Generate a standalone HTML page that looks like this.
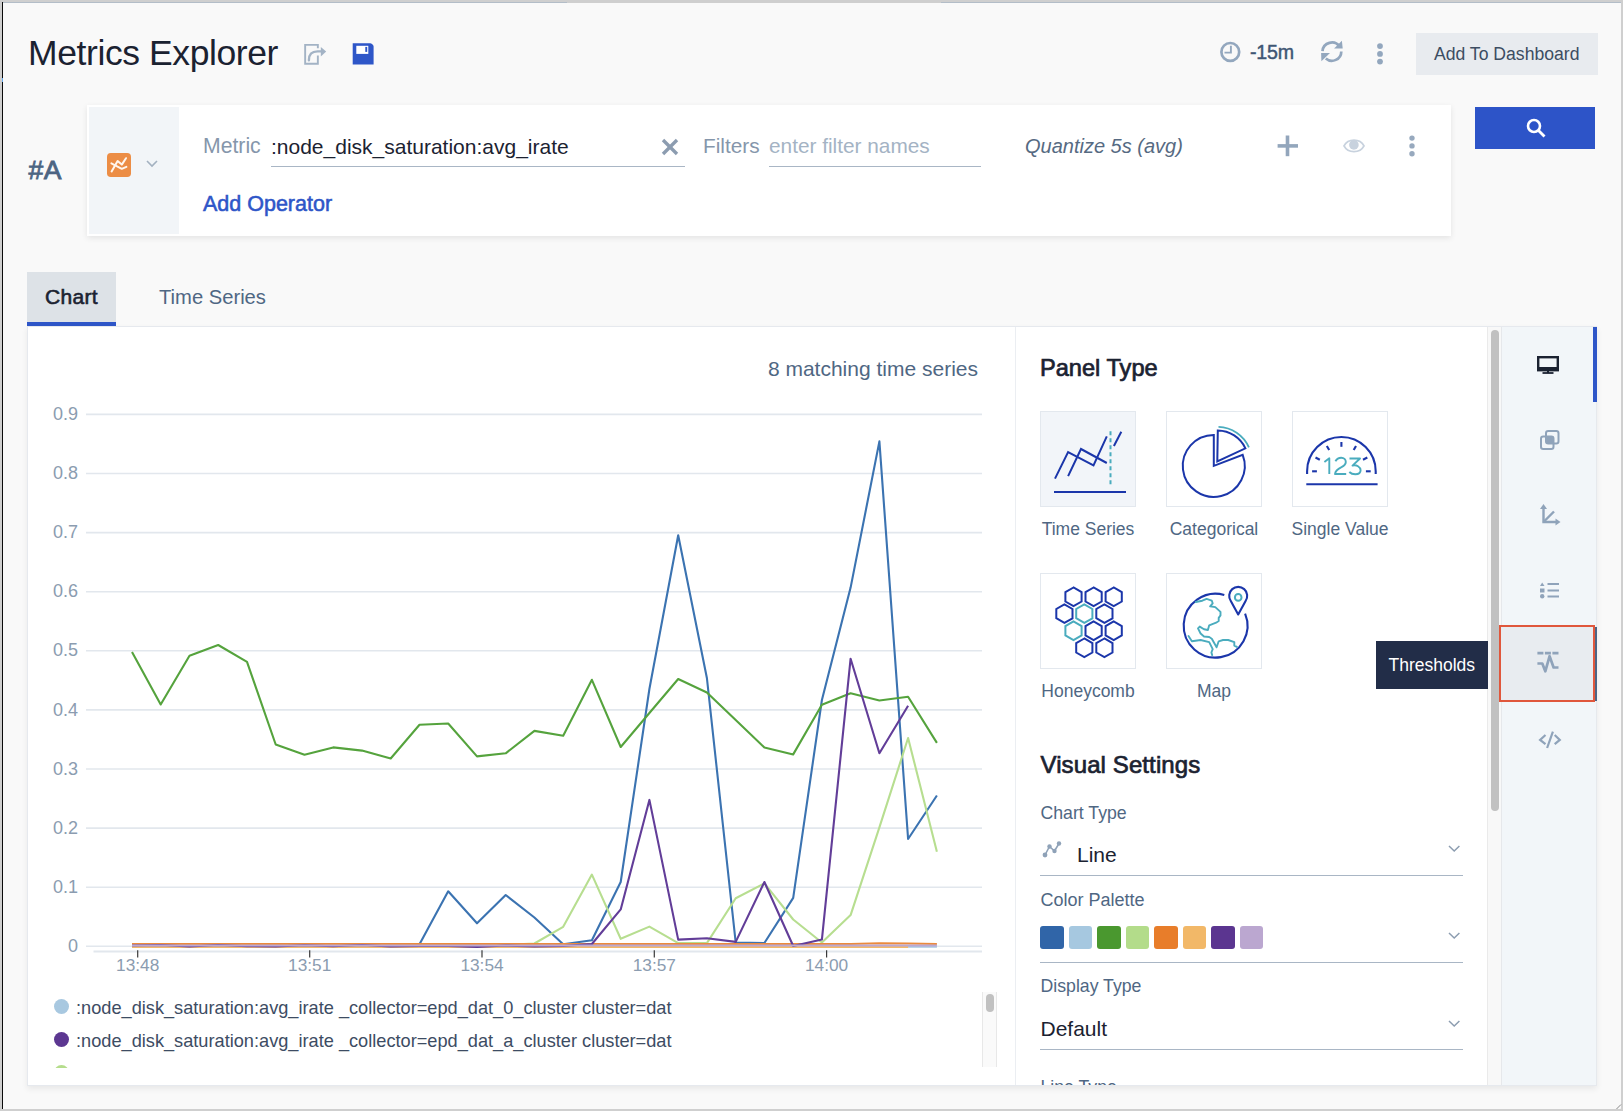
<!DOCTYPE html>
<html><head><meta charset="utf-8"><style>
html,body{margin:0;padding:0;}
body{width:1623px;height:1111px;position:relative;overflow:hidden;background:#f9f9f9;font-family:"Liberation Sans", sans-serif;}
.t{position:absolute;white-space:nowrap;line-height:1;font-family:"Liberation Sans", sans-serif;}
svg{overflow:visible}
</style></head><body>
<div style="position:absolute;left:0px;top:0px;width:1623px;height:3px;background:#cfcfcf"></div>
<div style="position:absolute;left:3px;top:2px;width:564px;height:1px;background:#b3bdc8"></div>
<div style="position:absolute;left:941px;top:2px;width:680px;height:1px;background:#b3bdc8"></div>
<div style="position:absolute;left:0px;top:0px;width:2px;height:1111px;background:#cfcfcf"></div>
<div style="position:absolute;left:2px;top:2px;width:1px;height:1109px;background:#0a0a0a"></div>
<div style="position:absolute;left:2px;top:78px;width:1px;height:4px;background:#6aaef0"></div>
<div style="position:absolute;left:1621px;top:0px;width:2px;height:1111px;background:#cfcfcf"></div>
<div style="position:absolute;left:0px;top:1109px;width:1623px;height:2px;background:#cfcfcf"></div>
<svg style="position:absolute;left:1608px;top:1096px" width="15" height="15" viewBox="0 0 15 15"><path d="M15 7 V15 H7 A8 8 0 0 0 15 7 Z" fill="#cfcfcf"/><path d="M13 8.5 L8.5 13" stroke="#8a8a8a" stroke-width="1"/></svg>
<div class="t" style="left:28px;top:36.2px;font-size:35.5px;color:#1b2231;font-weight:400;font-style:normal;letter-spacing:-0.4px;">Metrics Explorer</div>
<svg style="position:absolute;left:302px;top:43px" width="26" height="23" viewBox="0 0 26 23"><path d="M15.85 5.3 V1.85 H3.15 V20.75 H15.85 V12.5" fill="none" stroke="#a3b3c5" stroke-width="1.9"/><path d="M6.9 17.2 C6.9 11 10 8.4 15.5 8.4 H19.5" fill="none" stroke="#a3b3c5" stroke-width="2.4" stroke-linecap="round"/><path d="M18.8 3.9 L24.2 8.4 L18.8 13.6 Z" fill="#a3b3c5"/></svg>
<svg style="position:absolute;left:352px;top:43px" width="23" height="23" viewBox="0 0 23 23"><path d="M0.7 0.3 H18.2 Q19.2 0.3 20 1.1 L21 2.1 Q21.6 2.8 21.6 3.6 V21.4 H0.7 Z" fill="#2e56c8"/><rect x="4.3" y="2.8" width="12" height="8.1" fill="#ffffff"/><rect x="13.3" y="3.9" width="1.9" height="5" fill="#2e56c8"/></svg>
<svg style="position:absolute;left:1219px;top:40px" width="23" height="23" viewBox="0 0 23 23"><circle cx="11.3" cy="11.9" r="8.9" fill="none" stroke="#93a7be" stroke-width="2.7"/><path d="M11.9 5.8 V12.6 H5.5" fill="none" stroke="#93a7be" stroke-width="1.9"/></svg>
<div class="t" style="left:1250px;top:42.6px;font-size:19.6px;color:#3f5674;font-weight:400;font-style:normal;letter-spacing:-0.2px;-webkit-text-stroke:0.45px #3f5674">-15m</div>
<svg style="position:absolute;left:1318px;top:38px" width="28" height="28" viewBox="0 0 28 28"><g fill="none" stroke="#93a7be" stroke-width="2.7"><path d="M4.5 13.1 A9.4 9.4 0 0 1 21.5 8.5"/><path d="M23.3 13.4 A9.4 9.4 0 0 1 7.8 20.5"/></g><path d="M23.9 2.8 L24.7 10.6 L16.1 10.6 Z" fill="#93a7be"/><path d="M3.1 15 L12 15 L3.4 23.3 Z" fill="#93a7be"/></svg>
<svg style="position:absolute;left:1376px;top:43px" width="8" height="22" viewBox="0 0 8 22"><g fill="#93a7be"><circle cx="4" cy="3.1" r="2.9"/><circle cx="4" cy="10.9" r="2.9"/><circle cx="4" cy="18.6" r="2.9"/></g></svg>
<div style="position:absolute;left:1416px;top:33px;width:182px;height:42px;background:#e8ebef"></div>
<div class="t" style="left:1434px;top:46.3px;font-size:17.6px;color:#3c4d62;font-weight:400;font-style:normal;letter-spacing:0px;">Add To Dashboard</div>
<div class="t" style="left:28.5px;top:156.9px;font-size:26.5px;color:#4c6482;font-weight:400;font-style:normal;letter-spacing:0.6px;-webkit-text-stroke:0.8px #4c6482">#A</div>
<div style="position:absolute;left:87px;top:105px;width:1364px;height:131px;background:#fff;box-shadow:0 2px 6px rgba(0,0,0,0.09)"></div>
<div style="position:absolute;left:89px;top:107px;width:90px;height:127px;background:#f2f5f8"></div>
<svg style="position:absolute;left:107px;top:153px" width="24" height="24" viewBox="0 0 24 24"><rect x="0" y="0" width="24" height="24" rx="3.8" fill="#ec8d45"/><g fill="none" stroke="#fff6ee" stroke-width="2" stroke-linecap="round" stroke-linejoin="round"><path d="M4.6 18.4 L10.6 8 L14.8 11.6 L19 5.2"/><path d="M4.4 10.4 L14.8 15.8 L19.4 13.8"/></g></svg>
<svg style="position:absolute;left:146px;top:160px" width="12" height="8" viewBox="0 0 12 8"><path d="M1 1 L6 6 L11 1" fill="none" stroke="#a3b1c0" stroke-width="1.6"/></svg>
<div class="t" style="left:203px;top:135.2px;font-size:21.2px;color:#8596ab;font-weight:400;font-style:normal;letter-spacing:0px;">Metric</div>
<div class="t" style="left:271px;top:135.7px;font-size:21px;color:#1b2231;font-weight:400;font-style:normal;letter-spacing:0px;">:node_disk_saturation:avg_irate</div>
<div style="position:absolute;left:271px;top:166px;width:414px;height:1.3px;background:#a9b6c5"></div>
<svg style="position:absolute;left:661px;top:138px" width="18" height="18" viewBox="0 0 18 18"><g stroke="#8c9cb0" stroke-width="3.4" stroke-linecap="butt"><path d="M2 2 L16 16"/><path d="M16 2 L2 16"/></g></svg>
<div class="t" style="left:703px;top:135.5px;font-size:20.8px;color:#8596ab;font-weight:400;font-style:normal;letter-spacing:0px;">Filters</div>
<div class="t" style="left:769px;top:135.5px;font-size:20.8px;color:#a4b3c4;font-weight:400;font-style:normal;letter-spacing:0px;">enter filter names</div>
<div style="position:absolute;left:769px;top:165.5px;width:212px;height:1.3px;background:#a9b6c5"></div>
<div class="t" style="left:1025px;top:135.7px;font-size:20px;color:#566a82;font-weight:400;font-style:italic;letter-spacing:0px;">Quantize 5s (avg)</div>
<svg style="position:absolute;left:1277px;top:135px" width="22" height="22" viewBox="0 0 22 22"><g stroke="#93a6bc" stroke-width="3.6"><path d="M10.5 0.5 V21.2"/><path d="M0.6 10.9 H21"/></g></svg>
<svg style="position:absolute;left:1343px;top:138px" width="22" height="16" viewBox="0 0 22 16"><defs><clipPath id="eyec"><path d="M1 7.9 C5 0.2 17 0.2 21 7.9 C17 15.6 5 15.6 1 7.9 Z"/></clipPath></defs><circle cx="10.9" cy="6.9" r="4.8" fill="#c8d2de" clip-path="url(#eyec)"/><path d="M1 7.9 C5 0.2 17 0.2 21 7.9 C17 15.6 5 15.6 1 7.9 Z" fill="none" stroke="#c8d2de" stroke-width="1.8"/></svg>
<svg style="position:absolute;left:1408px;top:135px" width="8" height="22" viewBox="0 0 8 22"><g fill="#97a9be"><circle cx="4" cy="3.1" r="2.7"/><circle cx="4" cy="10.9" r="2.7"/><circle cx="4" cy="18.8" r="2.7"/></g></svg>
<div class="t" style="left:203px;top:193.8px;font-size:21.5px;color:#2e56c8;font-weight:400;font-style:normal;letter-spacing:0px;-webkit-text-stroke:0.55px #2e56c8">Add Operator</div>
<div style="position:absolute;left:1475px;top:107px;width:120px;height:42px;background:#2d54c8"></div>
<svg style="position:absolute;left:1525.5px;top:117.5px" width="20" height="20" viewBox="0 0 20 20"><circle cx="8" cy="8" r="6" fill="none" stroke="#fff" stroke-width="2.6"/><path d="M12.5 12.5 L18.5 18.5" stroke="#fff" stroke-width="2.8"/></svg>
<div style="position:absolute;left:27px;top:272px;width:89px;height:50px;background:#dde2e7"></div>
<div style="position:absolute;left:27px;top:322px;width:89px;height:4px;background:#2e56c8"></div>
<div class="t" style="left:45px;top:285.9px;font-size:21px;color:#1b2231;font-weight:400;font-style:normal;letter-spacing:0.3px;-webkit-text-stroke:0.6px #1b2231">Chart</div>
<div class="t" style="left:159px;top:286.6px;font-size:20.2px;color:#4f6783;font-weight:400;font-style:normal;letter-spacing:0px;">Time Series</div>
<div style="position:absolute;left:27px;top:326px;width:1570px;height:760px;background:#fff;box-shadow:0 3px 6px rgba(0,0,0,0.07);border:1px solid #e6e9ee;box-sizing:border-box"></div>
<div style="position:absolute;left:1015px;top:327px;width:1px;height:758px;background:#ebeef2"></div>
<div class="t" style="right:645px;top:358.4px;font-size:21px;color:#4f6783;font-weight:400;font-style:normal;letter-spacing:0px;">8 matching time series</div>
<svg style="position:absolute;left:0px;top:0px" width="1623" height="1111" viewBox="0 0 1623 1111"><line x1="86" y1="946.3" x2="982" y2="946.3" stroke="#e2e7ed" stroke-width="1.6"/><line x1="86" y1="887.2" x2="982" y2="887.2" stroke="#e2e7ed" stroke-width="1.6"/><line x1="86" y1="828.1" x2="982" y2="828.1" stroke="#e2e7ed" stroke-width="1.6"/><line x1="86" y1="769.0" x2="982" y2="769.0" stroke="#e2e7ed" stroke-width="1.6"/><line x1="86" y1="709.9" x2="982" y2="709.9" stroke="#e2e7ed" stroke-width="1.6"/><line x1="86" y1="650.8" x2="982" y2="650.8" stroke="#e2e7ed" stroke-width="1.6"/><line x1="86" y1="591.7" x2="982" y2="591.7" stroke="#e2e7ed" stroke-width="1.6"/><line x1="86" y1="532.6" x2="982" y2="532.6" stroke="#e2e7ed" stroke-width="1.6"/><line x1="86" y1="473.5" x2="982" y2="473.5" stroke="#e2e7ed" stroke-width="1.6"/><line x1="86" y1="414.4" x2="982" y2="414.4" stroke="#e2e7ed" stroke-width="1.6"/><line x1="93.5" y1="951.5" x2="982" y2="951.5" stroke="#e2e7ed" stroke-width="1.8"/><line x1="137.7" y1="950.2" x2="137.7" y2="957.5" stroke="#3a3a3a" stroke-width="1.2"/><line x1="309.7" y1="950.2" x2="309.7" y2="957.5" stroke="#3a3a3a" stroke-width="1.2"/><line x1="482.0" y1="950.2" x2="482.0" y2="957.5" stroke="#3a3a3a" stroke-width="1.2"/><line x1="654.3" y1="950.2" x2="654.3" y2="957.5" stroke="#3a3a3a" stroke-width="1.2"/><line x1="826.6" y1="950.2" x2="826.6" y2="957.5" stroke="#3a3a3a" stroke-width="1.2"/><polyline points="132.0,945.0 160.7,945.0 189.5,945.0 218.2,945.0 247.0,945.0 275.7,945.0 304.5,945.0 333.2,945.0 362.0,945.0 390.7,945.0 419.5,944.3 448.2,891.3 477.0,923.3 505.7,895.0 534.4,917.5 563.2,944.3 591.9,940.2 620.7,882.0 649.4,689.0 678.2,535.2 706.9,678.0 735.7,942.5 764.4,943.0 793.2,897.9 821.9,700.0 850.6,587.6 879.4,441.4 908.1,839.0 936.9,795.5" fill="none" stroke="#3b73b1" stroke-width="2.1" stroke-linejoin="round" stroke-linecap="butt"/><polyline points="132.0,946.8 160.7,946.8 189.5,946.8 218.2,946.8 247.0,946.8 275.7,946.8 304.5,946.8 333.2,946.8 362.0,946.8 390.7,946.8 419.5,946.8 448.2,946.8 477.0,946.8 505.7,946.8 534.4,946.8 563.2,946.8 591.9,946.8 620.7,946.8 649.4,946.8 678.2,946.8 706.9,946.8 735.7,946.8 764.4,946.8 793.2,946.8 821.9,946.8 850.6,946.8 879.4,946.8 908.1,946.8 936.9,946.8" fill="none" stroke="#a8c8e0" stroke-width="2" stroke-linejoin="round" stroke-linecap="butt"/><polyline points="132.0,652.0 160.7,704.5 189.5,655.7 218.2,645.0 247.0,661.9 275.7,744.5 304.5,754.8 333.2,747.4 362.0,750.6 390.7,758.5 419.5,724.7 448.2,723.5 477.0,756.4 505.7,753.3 534.4,730.9 563.2,735.7 591.9,679.8 620.7,747.0 649.4,713.0 678.2,679.0 706.9,692.5 735.7,720.0 764.4,747.5 793.2,754.4 821.9,704.8 850.6,693.3 879.4,700.5 908.1,696.8 936.9,742.9" fill="none" stroke="#55a33d" stroke-width="2.1" stroke-linejoin="round" stroke-linecap="butt"/><polyline points="132.0,945.0 160.7,945.0 189.5,945.0 218.2,945.0 247.0,945.0 275.7,945.0 304.5,945.0 333.2,945.0 362.0,945.0 390.7,945.0 419.5,945.0 448.2,945.0 477.0,945.0 505.7,945.0 534.4,943.5 563.2,926.8 591.9,874.6 620.7,938.8 649.4,926.6 678.2,943.1 706.9,943.1 735.7,898.2 764.4,883.4 793.2,919.5 821.9,942.5 850.6,915.1 879.4,827.3 908.1,738.0 936.9,851.8" fill="none" stroke="#b7de90" stroke-width="2.1" stroke-linejoin="round" stroke-linecap="butt"/><polyline points="132.0,943.9 160.7,943.9 189.5,943.9 218.2,943.9 247.0,943.9 275.7,943.9 304.5,943.9 333.2,943.9 362.0,943.9 390.7,943.9 419.5,943.9 448.2,943.9 477.0,943.9 505.7,943.9 534.4,943.9 563.2,943.9 591.9,943.9 620.7,943.9 649.4,943.9 678.2,943.9 706.9,943.9 735.7,943.9 764.4,943.9 793.2,943.9 821.9,943.9 850.6,943.9 879.4,943.2 908.1,943.6 936.9,943.9" fill="none" stroke="#eb8a3c" stroke-width="2" stroke-linejoin="round" stroke-linecap="butt"/><polyline points="132.0,947.0 160.7,947.0 189.5,947.0 218.2,947.0 247.0,947.0 275.7,947.0 304.5,947.0 333.2,947.0 362.0,947.0 390.7,947.0 419.5,947.0 448.2,947.0 477.0,947.0 505.7,947.0 534.4,947.0 563.2,947.0 591.9,947.0 620.7,947.0 649.4,947.0 678.2,947.0 706.9,947.0 735.7,947.0 764.4,947.0 793.2,947.0 821.9,947.0 850.6,947.0 879.4,947.0 908.1,947.0" fill="none" stroke="#f3b96a" stroke-width="2" stroke-linejoin="round" stroke-linecap="butt"/><polyline points="132.0,945.5 160.7,945.0 189.5,946.5 218.2,945.0 247.0,946.2 275.7,946.5 304.5,945.2 333.2,946.2 362.0,945.0 390.7,946.5 419.5,946.0 448.2,946.0 477.0,947.0 505.7,945.5 534.4,946.5 563.2,946.0 591.9,944.0 620.7,909.4 649.4,799.9 678.2,939.6 706.9,938.2 735.7,941.9 764.4,882.0 793.2,946.0 821.9,939.6 850.6,658.7 879.4,753.2 908.1,705.7" fill="none" stroke="#623d98" stroke-width="2.1" stroke-linejoin="round" stroke-linecap="butt"/><polyline points="132.0,945.6 160.7,945.6 189.5,945.6 218.2,945.6 247.0,945.6 275.7,945.6 304.5,945.6 333.2,945.6 362.0,945.6 390.7,945.6 419.5,945.6 448.2,945.6 477.0,945.6 505.7,945.6 534.4,945.6 563.2,945.6 591.9,945.6 620.7,945.6 649.4,945.6 678.2,945.6 706.9,945.6 735.7,945.6 764.4,945.6 793.2,945.6 821.9,945.6 850.6,945.6 879.4,945.6 908.1,945.6 936.9,945.6" fill="none" stroke="#bca8d1" stroke-width="2" stroke-linejoin="round" stroke-linecap="butt"/></svg>
<div class="t" style="right:1545px;top:936.9px;font-size:18px;color:#8b9cb0;font-weight:400;font-style:normal;letter-spacing:0px;">0</div>
<div class="t" style="right:1545px;top:877.8px;font-size:18px;color:#8b9cb0;font-weight:400;font-style:normal;letter-spacing:0px;">0.1</div>
<div class="t" style="right:1545px;top:818.7px;font-size:18px;color:#8b9cb0;font-weight:400;font-style:normal;letter-spacing:0px;">0.2</div>
<div class="t" style="right:1545px;top:759.6px;font-size:18px;color:#8b9cb0;font-weight:400;font-style:normal;letter-spacing:0px;">0.3</div>
<div class="t" style="right:1545px;top:700.5px;font-size:18px;color:#8b9cb0;font-weight:400;font-style:normal;letter-spacing:0px;">0.4</div>
<div class="t" style="right:1545px;top:641.4px;font-size:18px;color:#8b9cb0;font-weight:400;font-style:normal;letter-spacing:0px;">0.5</div>
<div class="t" style="right:1545px;top:582.3px;font-size:18px;color:#8b9cb0;font-weight:400;font-style:normal;letter-spacing:0px;">0.6</div>
<div class="t" style="right:1545px;top:523.2px;font-size:18px;color:#8b9cb0;font-weight:400;font-style:normal;letter-spacing:0px;">0.7</div>
<div class="t" style="right:1545px;top:464.1px;font-size:18px;color:#8b9cb0;font-weight:400;font-style:normal;letter-spacing:0px;">0.8</div>
<div class="t" style="right:1545px;top:405.0px;font-size:18px;color:#8b9cb0;font-weight:400;font-style:normal;letter-spacing:0px;">0.9</div>
<div class="t" style="left:77.69999999999999px;width:120px;text-align:center;top:957.2px;font-size:17.3px;color:#8b9cb0">13:48</div>
<div class="t" style="left:249.7px;width:120px;text-align:center;top:957.2px;font-size:17.3px;color:#8b9cb0">13:51</div>
<div class="t" style="left:422.0px;width:120px;text-align:center;top:957.2px;font-size:17.3px;color:#8b9cb0">13:54</div>
<div class="t" style="left:594.3px;width:120px;text-align:center;top:957.2px;font-size:17.3px;color:#8b9cb0">13:57</div>
<div class="t" style="left:766.6px;width:120px;text-align:center;top:957.2px;font-size:17.3px;color:#8b9cb0">14:00</div>
<div style="position:absolute;left:54px;top:999.4px;width:15px;height:15px;border-radius:50%;background:#a8c8e0"></div>
<div style="position:absolute;left:54px;top:1032px;width:15px;height:15px;border-radius:50%;background:#5c3791"></div>
<div style="position:absolute;left:54px;top:1065px;width:15px;height:15px;border-radius:50%;background:#b5dd8c;clip-path:inset(0 0 12px 0)"></div>
<div class="t" style="left:76px;top:999.2px;font-size:18.2px;color:#3d4c63;font-weight:400;font-style:normal;letter-spacing:0px;">:node_disk_saturation:avg_irate _collector=epd_dat_0_cluster cluster=dat</div>
<div class="t" style="left:76px;top:1031.8px;font-size:18.2px;color:#3d4c63;font-weight:400;font-style:normal;letter-spacing:0px;">:node_disk_saturation:avg_irate _collector=epd_dat_a_cluster cluster=dat</div>
<div style="position:absolute;left:982px;top:992px;width:15px;height:75px;background:#fafafa;border-left:1px solid #e8e8e8;border-right:1px solid #e8e8e8;box-sizing:border-box"></div>
<div style="position:absolute;left:986px;top:994px;width:8px;height:18px;background:#c1c1c1;border-radius:4px"></div>
<div class="t" style="left:1040px;top:357.4px;font-size:23.6px;color:#1b2231;font-weight:400;font-style:normal;letter-spacing:0px;-webkit-text-stroke:0.7px #1b2231">Panel Type</div>
<div style="position:absolute;left:1040px;top:411px;width:96px;height:96px;background:#f2f5f9;border:1px solid #e3e8ee;box-sizing:border-box"></div>
<div style="position:absolute;left:1166px;top:411px;width:96px;height:96px;background:#fff;border:1px solid #e3e8ee;box-sizing:border-box"></div>
<div style="position:absolute;left:1292px;top:411px;width:96px;height:96px;background:#fff;border:1px solid #e3e8ee;box-sizing:border-box"></div>
<div style="position:absolute;left:1040px;top:573px;width:96px;height:96px;background:#fff;border:1px solid #e3e8ee;box-sizing:border-box"></div>
<div style="position:absolute;left:1166px;top:573px;width:96px;height:96px;background:#fff;border:1px solid #e3e8ee;box-sizing:border-box"></div>
<svg style="position:absolute;left:1040px;top:411px" width="96" height="96" viewBox="0 0 96 96"><g fill="none" stroke="#1b36aa" stroke-width="2"><path d="M14 81 H86"/><path d="M15 67.6 L28.1 41 L53.5 54.3 L66.8 25.4"/><path d="M28.1 65.1 L41 38 L66.8 52"/><path d="M73.9 35 L81.3 20.7"/></g><path d="M70.5 20.3 V74.2" stroke="#4aacbe" stroke-width="2" stroke-dasharray="4 3"/></svg>
<svg style="position:absolute;left:1166px;top:411px" width="96" height="96" viewBox="0 0 96 96"><g fill="none" stroke="#1b36aa" stroke-width="2"><path d="M47.8 23.9 A31 31 0 1 0 76.7 43.8 L47.8 54.9 Z"/><path d="M51.8 19.4 A31 31 0 0 1 79.4 37.3 L51.3 50.4 Z"/></g><path d="M52.5 15.8 A34.6 34.6 0 0 1 82.9 36.3" fill="none" stroke="#4aacbe" stroke-width="1.8"/></svg>
<svg style="position:absolute;left:1292px;top:411px" width="96" height="96" viewBox="0 0 96 96"><g fill="none" stroke="#1b36aa" stroke-width="2.1"><path d="M15.1 63 V60.3 A34.3 34.3 0 0 1 83.7 60.3 V63"/><path d="M14.3 73.3 H85.6"/><path d="M24.9 60.3 L20.1 60.3"/><path d="M27.8 48.8 L23.5 46.5"/><path d="M37.2 39.1 L34.8 34.9"/><path d="M49.4 35.8 L49.4 31.0"/><path d="M61.7 39.1 L64.0 34.9"/><path d="M71.0 48.8 L75.3 46.5"/><path d="M73.9 60.3 L78.7 60.3"/></g><g fill="none" stroke="#4aacbe" stroke-width="1.9" stroke-linejoin="round"><path d="M32.4 51 L37.3 47.3 V63"/><path d="M43.4 50.3 C45 47.5 47 46.8 49.2 46.8 C52 46.8 53.8 48.7 53.8 51 C53.8 53.5 52 54.8 49.5 56.2 C46 58 43.3 59.8 43 63 H54.2"/><path d="M57.5 47.5 H68 L60.5 54.6 C63 54 64.5 54.3 66 55.2 C67.8 56.3 68.6 58 68.6 59.3 C68.6 61.8 66.3 63.3 63.3 63.3 C60.8 63.3 58.8 62.5 57.3 61"/></g></svg>
<svg style="position:absolute;left:1040px;top:573px" width="96" height="96" viewBox="0 0 96 96"><path d="M33.5,14.5 L25.4,19.2 L25.4,28.5 L33.5,33.1 L41.6,28.5 L41.6,19.1 Z" fill="none" stroke="#1b36aa" stroke-width="2"/><path d="M53.6,14.5 L45.5,19.2 L45.5,28.5 L53.6,33.1 L61.7,28.5 L61.7,19.1 Z" fill="none" stroke="#1b36aa" stroke-width="2"/><path d="M73.7,14.5 L65.6,19.2 L65.6,28.5 L73.7,33.1 L81.8,28.5 L81.8,19.1 Z" fill="none" stroke="#1b36aa" stroke-width="2"/><path d="M24.4,31.3 L16.3,36.0 L16.3,45.2 L24.4,49.9 L32.5,45.3 L32.5,36.0 Z" fill="none" stroke="#1b36aa" stroke-width="2"/><path d="M44.3,31.3 L36.2,36.0 L36.2,45.2 L44.3,49.9 L52.4,45.3 L52.4,36.0 Z" fill="none" stroke="#4aacbe" stroke-width="2"/><path d="M64.4,31.3 L56.3,36.0 L56.3,45.2 L64.4,49.9 L72.5,45.3 L72.5,36.0 Z" fill="none" stroke="#1b36aa" stroke-width="2"/><path d="M33.5,48.4 L25.4,53.1 L25.4,62.4 L33.5,67.0 L41.6,62.4 L41.6,53.1 Z" fill="none" stroke="#4aacbe" stroke-width="2"/><path d="M53.6,48.4 L45.5,53.1 L45.5,62.4 L53.6,67.0 L61.7,62.4 L61.7,53.1 Z" fill="none" stroke="#1b36aa" stroke-width="2"/><path d="M73.7,48.4 L65.6,53.1 L65.6,62.4 L73.7,67.0 L81.8,62.4 L81.8,53.1 Z" fill="none" stroke="#1b36aa" stroke-width="2"/><path d="M44.3,65.5 L36.2,70.1 L36.2,79.5 L44.3,84.1 L52.4,79.5 L52.4,70.1 Z" fill="none" stroke="#1b36aa" stroke-width="2"/><path d="M64.4,65.5 L56.3,70.1 L56.3,79.5 L64.4,84.1 L72.5,79.5 L72.5,70.1 Z" fill="none" stroke="#1b36aa" stroke-width="2"/></svg>
<svg style="position:absolute;left:1166px;top:573px" width="96" height="96" viewBox="0 0 96 96"><path d="M58.3 22 A31.9 31.9 0 1 0 79.1 40.6" fill="none" stroke="#1b36aa" stroke-width="2.1"/><path d="M72.2 41.5 L64.8 28 A9 9 0 1 1 79.6 28 Z" fill="none" stroke="#1b36aa" stroke-width="2.1" stroke-linejoin="round"/><circle cx="72.2" cy="24.4" r="3.3" fill="none" stroke="#4aacbe" stroke-width="2"/><g fill="none" stroke="#4aacbe" stroke-width="1.9" stroke-linejoin="round" stroke-linecap="round"><path d="M29.8 29 L36.3 27.7 L40.6 25.9 L45.8 27.7 L46.7 30.3 L44.1 33.3 L49.3 34.1 L54.5 38.9 L54.5 42.4 L52.7 44.9 L52.7 48 L50.1 49.7 L43.2 52.3 L41.9 57 L38 56.2 L33.7 53.6 L32 55.3 L34.6 60.5 L38 63.5 L43.2 64 L45.8 65.7 L50.6 74.3 L52.7 68.3 L57 67 L62.2 67 L68.3 69.1 L68.3 72.6 L70.9 73.9"/><path d="M22.5 63.1 L25.9 68.3 L34.6 67 L43.2 69.1 L46.7 76.1 L45.4 79.5 L46.2 82.1"/></g></svg>
<div class="t" style="left:1018px;width:140px;text-align:center;top:521.1px;font-size:17.5px;color:#4f6783">Time Series</div>
<div class="t" style="left:1144px;width:140px;text-align:center;top:521.1px;font-size:17.5px;color:#4f6783">Categorical</div>
<div class="t" style="left:1270px;width:140px;text-align:center;top:521.1px;font-size:17.5px;color:#4f6783">Single Value</div>
<div class="t" style="left:1018px;width:140px;text-align:center;top:683.2px;font-size:17.5px;color:#4f6783">Honeycomb</div>
<div class="t" style="left:1144px;width:140px;text-align:center;top:683.2px;font-size:17.5px;color:#4f6783">Map</div>
<div class="t" style="left:1040.5px;top:752.6px;font-size:24px;color:#1b2231;font-weight:400;font-style:normal;letter-spacing:0.1px;-webkit-text-stroke:0.7px #1b2231">Visual Settings</div>
<div class="t" style="left:1040.5px;top:804.5px;font-size:17.7px;color:#4f6783;font-weight:400;font-style:normal;letter-spacing:0px;">Chart Type</div>
<svg style="position:absolute;left:1042px;top:841px" width="20" height="18" viewBox="0 0 20 18"><g fill="#8fa2b8"><circle cx="3" cy="14" r="2.4"/><circle cx="7.5" cy="5.5" r="2.2"/><circle cx="12.5" cy="10" r="2.2"/><circle cx="17" cy="2.5" r="2.2"/></g><path d="M3 14 L7.5 5.5 L12.5 10 L17 2.5" fill="none" stroke="#8fa2b8" stroke-width="1.6"/></svg>
<div class="t" style="left:1077px;top:844.2px;font-size:21px;color:#1b2231;font-weight:400;font-style:normal;letter-spacing:0px;">Line</div>
<svg style="position:absolute;left:1448px;top:845px" width="13" height="8" viewBox="0 0 13 8"><path d="M1 1 L6.2 6 L11.4 1" fill="none" stroke="#8c9db0" stroke-width="1.5"/></svg>
<div style="position:absolute;left:1040px;top:875px;width:423px;height:1.2px;background:#a9b6c5"></div>
<div class="t" style="left:1040.5px;top:891.4px;font-size:18px;color:#4f6783;font-weight:400;font-style:normal;letter-spacing:0px;">Color Palette</div>
<div style="position:absolute;left:1040.0px;top:925.5px;width:23.5px;height:23px;background:#3065a8;border-radius:3px"></div>
<div style="position:absolute;left:1068.5px;top:925.5px;width:23.5px;height:23px;background:#a6c8e0;border-radius:3px"></div>
<div style="position:absolute;left:1097.0px;top:925.5px;width:23.5px;height:23px;background:#4a982f;border-radius:3px"></div>
<div style="position:absolute;left:1125.5px;top:925.5px;width:23.5px;height:23px;background:#b3dc8a;border-radius:3px"></div>
<div style="position:absolute;left:1154.0px;top:925.5px;width:23.5px;height:23px;background:#e87d2a;border-radius:3px"></div>
<div style="position:absolute;left:1182.5px;top:925.5px;width:23.5px;height:23px;background:#f2b868;border-radius:3px"></div>
<div style="position:absolute;left:1211.0px;top:925.5px;width:23.5px;height:23px;background:#5b3590;border-radius:3px"></div>
<div style="position:absolute;left:1239.5px;top:925.5px;width:23.5px;height:23px;background:#bba7d0;border-radius:3px"></div>
<svg style="position:absolute;left:1448px;top:932px" width="13" height="8" viewBox="0 0 13 8"><path d="M1 1 L6.2 6 L11.4 1" fill="none" stroke="#8c9db0" stroke-width="1.5"/></svg>
<div style="position:absolute;left:1040px;top:962px;width:423px;height:1.2px;background:#a9b6c5"></div>
<div class="t" style="left:1040.5px;top:978.4px;font-size:17.7px;color:#4f6783;font-weight:400;font-style:normal;letter-spacing:0px;">Display Type</div>
<div class="t" style="left:1040.5px;top:1018.2px;font-size:21px;color:#1b2231;font-weight:400;font-style:normal;letter-spacing:0px;">Default</div>
<svg style="position:absolute;left:1448px;top:1019.5px" width="13" height="8" viewBox="0 0 13 8"><path d="M1 1 L6.2 6 L11.4 1" fill="none" stroke="#8c9db0" stroke-width="1.5"/></svg>
<div style="position:absolute;left:1040px;top:1049px;width:423px;height:1.2px;background:#a9b6c5"></div>
<div style="position:absolute;left:1016px;top:1070px;width:470px;height:15px;overflow:hidden"><div class="t" style="left:24.5px;top:8.5px;font-size:17.7px;color:#4f6783">Line Type</div></div>
<div style="position:absolute;left:1487px;top:327px;width:15px;height:758px;background:#f8f8f8;border-left:1px solid #eaeaea;border-right:1px solid #e6e8eb;box-sizing:border-box"></div>
<div style="position:absolute;left:1491px;top:330px;width:8px;height:481px;background:#c1c1c1;border-radius:4px"></div>
<div style="position:absolute;left:1502px;top:327px;width:95px;height:758px;background:#f2f6f9;border-right:1.5px solid #e6e9ed;box-sizing:border-box"></div>
<div style="position:absolute;left:1593px;top:327px;width:4px;height:75px;background:#2e56c8"></div>
<svg style="position:absolute;left:1537px;top:356px" width="22" height="18" viewBox="0 0 22 18"><rect x="1.2" y="1.2" width="19.6" height="13" fill="none" stroke="#1b2231" stroke-width="2.4"/><rect x="1" y="11" width="20" height="3.5" fill="#1b2231"/><path d="M11 14.5 V17" stroke="#1b2231" stroke-width="2"/><path d="M5.5 17 H16.5" stroke="#1b2231" stroke-width="1.8"/></svg>
<svg style="position:absolute;left:1540px;top:430px" width="20" height="20" viewBox="0 0 20 20"><rect x="6" y="1" width="12.5" height="12.5" rx="2.2" fill="none" stroke="#8fa3ba" stroke-width="2"/><rect x="1" y="6.5" width="12.5" height="12.5" rx="2.2" fill="none" stroke="#8fa3ba" stroke-width="2"/><rect x="6" y="6.5" width="7.5" height="7" fill="#8fa3ba"/></svg>
<svg style="position:absolute;left:1540px;top:504px" width="21" height="22" viewBox="0 0 21 22"><g fill="none" stroke="#8fa3ba" stroke-width="2.4"><path d="M3.5 4 V18 H16"/><path d="M3.5 18 L14 7.5"/></g><path d="M3.5 0 L7 5 L0 5 Z" fill="#8fa3ba"/><path d="M20.5 18 L15.5 21.5 L15.5 14.5 Z" fill="#8fa3ba"/></svg>
<svg style="position:absolute;left:1540px;top:582px" width="20" height="17" viewBox="0 0 20 17"><path d="M2.2 0.5 L4.5 4 L0 4 Z" fill="#8fa3ba"/><rect x="0" y="6.5" width="4.5" height="4" fill="#8fa3ba"/><circle cx="2.2" cy="14.2" r="2.2" fill="#8fa3ba"/><g stroke="#8fa3ba" stroke-width="2"><path d="M7.5 2 H19"/><path d="M7.5 8.5 H19"/><path d="M7.5 14.5 H19"/></g></svg>
<div style="position:absolute;left:1499px;top:625px;width:96px;height:77px;background:#e8ecf0;border:2px solid #e0573c;box-sizing:border-box"></div>
<div style="position:absolute;left:1595px;top:627px;width:2px;height:74px;background:#4b6585"></div>
<svg style="position:absolute;left:1537px;top:652px" width="22" height="22" viewBox="0 0 22 22"><g stroke="#8fa3ba" stroke-width="2.7" fill="none"><path d="M0.4 1.2 H6.4 M7.9 1.2 H13.9 M15.4 1.2 H21.5"/><path d="M0.4 11.5 H5.3 L8.3 19.3 L12.6 4.2 L16.6 15.5 H21.5" stroke-linejoin="round"/></g></svg>
<svg style="position:absolute;left:1539px;top:731px" width="22" height="19" viewBox="0 0 22 19"><g fill="none" stroke="#8fa3ba" stroke-width="2.2"><path d="M6.5 4 L1.1 8.9 L6.5 13.2"/><path d="M15.7 4 L20.8 8.9 L15.7 13.2"/><path d="M13.9 0.6 L8.1 17"/></g></svg>
<div style="position:absolute;left:1375.5px;top:641px;width:112px;height:48px;background:#222d48"></div>
<div class="t" style="left:1388.5px;top:656.7px;font-size:17.5px;color:#ffffff;font-weight:400;font-style:normal;letter-spacing:0px;">Thresholds</div>
</body></html>
